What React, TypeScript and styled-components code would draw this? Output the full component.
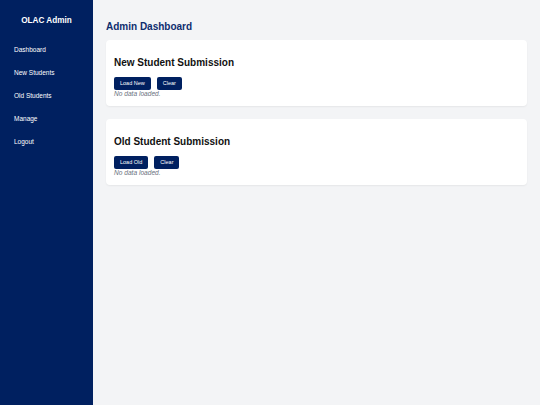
import React from 'react';
import styled, {createGlobalStyle} from 'styled-components';

const navy = '#002060';

const GlobalStyle = createGlobalStyle`
    html, body {
        margin: 0;
        padding: 0;
        height: 100%;
    }
    body {
        font-family: "Liberation Sans", Arial, sans-serif;
        background: #f3f4f6;
    }
    #root {
        height: 100%;
    }
`;

const Layout = styled.div`
    display: flex;
    width: 540px;
    height: 405px;
`;

const Sidebar = styled.aside`
    width: 93px;
    flex-shrink: 0;
    background: ${navy};
    color: #ffffff;
    display: flex;
    flex-direction: column;
    padding-top: 16px;
    box-sizing: border-box;
`;

const Brand = styled.div`
    font-size: 8.2px;
    line-height: 10px;
    font-weight: 700;
    text-align: center;
    margin-bottom: 11.5px;
`;

const NavLink = styled.a`
    display: block;
    padding: 8px 14px;
    font-size: 6.5px;
    line-height: 7px;
    color: #ffffff;
    text-decoration: none;
    cursor: pointer;
`;

const Main = styled.main`
    flex: 1;
    padding: 13px;
    background: #f3f4f6;
`;

const Title = styled.h1`
    margin: 8px 0 7px;
    font-size: 10px;
    line-height: 12px;
    font-weight: 700;
    color: #0e2d6e;
`;

const Card = styled.section`
    background: #ffffff;
    border-radius: 4px;
    padding: 8px;
    margin-bottom: 13px;
    box-shadow: 0 1px 2px rgba(0, 0, 0, 0.06);
`;

const CardTitle = styled.h2`
    margin: 9px 0 8px;
    font-size: 10px;
    line-height: 12px;
    font-weight: 700;
    color: #111111;
`;

const Actions = styled.div`
    display: flex;
    gap: 6px;
`;

const Button = styled.button`
    height: 13px;
    padding: 0 6px;
    border: none;
    border-radius: 2px;
    background: ${navy};
    color: #ffffff;
    font-family: "Liberation Sans", Arial, sans-serif;
    font-size: 5.5px;
    line-height: 13px;
    cursor: pointer;
`;

const Empty = styled.div`
    font-size: 6.6px;
    line-height: 8px;
    font-style: italic;
    color: #6b7280;
`;

interface SubmissionProps {
    title: string;
    loadLabel: string;
}

const Submission = ({title, loadLabel}: SubmissionProps) => (
    <Card>
        <CardTitle>{title}</CardTitle>
        <Actions>
            <Button>{loadLabel}</Button>
            <Button>Clear</Button>
        </Actions>
        <Empty>No data loaded.</Empty>
    </Card>
);

const links = ['Dashboard', 'New Students', 'Old Students', 'Manage', 'Logout'];

const App = () => {
    return (
        <>
            <GlobalStyle />
            <Layout>
                <Sidebar>
                    <Brand>OLAC Admin</Brand>
                    {links.map(link => (
                        <NavLink key={link}>{link}</NavLink>
                    ))}
                </Sidebar>
                <Main>
                    <Title>Admin Dashboard</Title>
                    <Submission title='New Student Submission' loadLabel='Load New' />
                    <Submission title='Old Student Submission' loadLabel='Load Old' />
                </Main>
            </Layout>
        </>
    );
};

export default App;
